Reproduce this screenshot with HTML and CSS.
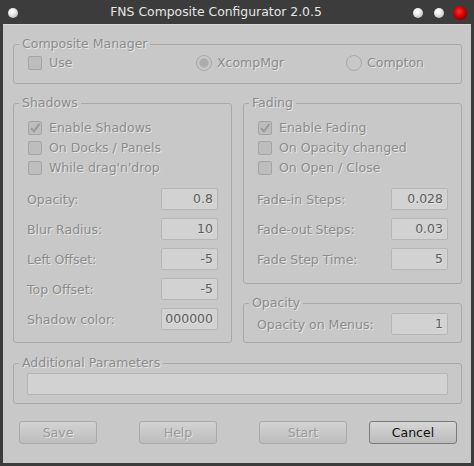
FILE: index.html
```html
<!DOCTYPE html>
<html>
<head>
<meta charset="utf-8">
<link rel="stylesheet" href="styles.css">
</head>
<body>
<div class="window">
  <div class="titlebar">
    <div class="tb-left"><span class="orb"></span></div>
    <div class="title">FNS Composite Configurator 2.0.5</div>
    <div class="tb-right"><span class="orb"></span><span class="orb"></span><span class="orb red"></span></div>
  </div>
  <div class="client">
    <fieldset class="group cm">
      <legend>Composite Manager</legend>
      <div class="cm-row">
        <div class="opt"><span class="check"></span><span class="txt">Use</span></div>
        <div class="opt"><span class="radio on"></span><span class="txt">XcompMgr</span></div>
        <div class="opt"><span class="radio"></span><span class="txt">Compton</span></div>
      </div>
    </fieldset>

    <div class="columns">
      <fieldset class="group shadows">
        <legend>Shadows</legend>
        <div class="checks">
          <div class="opt"><span class="check on"><svg viewBox="0 0 14 14" width="14" height="14"><path d="M3 7.2 L6 10.2 L11.5 2.8" fill="none" stroke="#9a9a9a" stroke-width="2"/></svg></span><span class="txt">Enable Shadows</span></div>
          <div class="opt"><span class="check"></span><span class="txt">On Docks / Panels</span></div>
          <div class="opt"><span class="check"></span><span class="txt">While drag'n'drop</span></div>
        </div>
        <div class="fields">
          <div class="field"><span class="lbl">Opacity:</span><span class="box">0.8</span></div>
          <div class="field"><span class="lbl">Blur Radius:</span><span class="box">10</span></div>
          <div class="field"><span class="lbl">Left Offset:</span><span class="box">-5</span></div>
          <div class="field"><span class="lbl">Top Offset:</span><span class="box">-5</span></div>
          <div class="field"><span class="lbl">Shadow color:</span><span class="box">000000</span></div>
        </div>
      </fieldset>

      <div class="col-right">
        <fieldset class="group fading">
          <legend>Fading</legend>
          <div class="checks">
            <div class="opt"><span class="check on"><svg viewBox="0 0 14 14" width="14" height="14"><path d="M3 7.2 L6 10.2 L11.5 2.8" fill="none" stroke="#9a9a9a" stroke-width="2"/></svg></span><span class="txt">Enable Fading</span></div>
            <div class="opt"><span class="check"></span><span class="txt">On Opacity changed</span></div>
            <div class="opt"><span class="check"></span><span class="txt">On Open / Close</span></div>
          </div>
          <div class="fields">
            <div class="field"><span class="lbl">Fade-in Steps:</span><span class="box">0.028</span></div>
            <div class="field"><span class="lbl">Fade-out Steps:</span><span class="box">0.03</span></div>
            <div class="field"><span class="lbl">Fade Step Time:</span><span class="box">5</span></div>
          </div>
        </fieldset>
        <fieldset class="group opacity">
          <legend>Opacity</legend>
          <div class="field"><span class="lbl">Opacity on Menus:</span><span class="box">1</span></div>
        </fieldset>
      </div>
    </div>

    <fieldset class="group extra">
      <legend>Additional Parameters</legend>
      <div class="wide-box"></div>
    </fieldset>

    <div class="buttons">
      <div class="btn w78">Save</div>
      <div class="btn w78 g42">Help</div>
      <div class="btn w88 g42">Start</div>
      <div class="btn w88 g22 active">Cancel</div>
    </div>
  </div>
</div>
</body>
</html>
```

FILE: styles.css
```css
html, body {
  margin: 0;
  padding: 0;
  background: #3c3c3c;
}

.window {
  width: 474px;
  height: 466px;
  background: #3c3c3c;
  display: flex;
  flex-direction: column;
  font-family: "DejaVu Sans", sans-serif;
  font-size: 12.5px;
  box-sizing: border-box;
}

.titlebar {
  height: 24px;
  display: flex;
  align-items: center;
  flex: none;
}

.tb-left {
  width: 26px;
  display: flex;
  align-items: center;
  padding-left: 8px;
  box-sizing: border-box;
}

.tb-left .orb {
  margin-top: 1px;
}

.title {
  flex: 1;
  text-align: center;
  color: #e6e6e6;
  font-size: 12.4px;
  line-height: 24px;
}

.tb-right {
  width: 68px;
  display: flex;
  align-items: center;
  gap: 11px;
  padding-left: 7px;
  box-sizing: border-box;
  padding-top: 2px;
}

.orb {
  display: block;
  width: 10px;
  height: 10px;
  border-radius: 50%;
  background: radial-gradient(circle at 40% 35%, #ffffff 0, #f0f0f0 30%, #c4c4c4 75%, #9a9a9a 100%);
}

.orb.red {
  background: radial-gradient(circle at 45% 40%, #ff3030 0, #d00000 45%, #8a0000 75%, #2c2c2c 78%, #262626 100%);
  width: 14px;
  height: 14px;
  margin-left: -2px;
}

.client {
  flex: 1;
  margin: 0 3px 3px 3px;
  background: #c8c8c8;
  padding: 12px 9px 0 10px;
  box-sizing: border-box;
  border-top: 1px solid #d6d6d6;
  display: flex;
  flex-direction: column;
}

.group {
  margin: 0;
  min-inline-size: 0;
  min-width: 0;
  border: 1px solid #a9a9a9;
  border-radius: 3px;
  padding: 0 13px 0 14px;
}

.group legend {
  padding: 0 3px;
  margin-left: -9px;
  line-height: 14px;
  font-size: 12.5px;
  color: #8c8c8c;
  text-shadow: 1px 1px 0 rgba(255,255,255,0.55);
}

.cm {
  padding-top: 4px;
  padding-bottom: 14px;
}

.cm-row {
  display: grid;
  grid-template-columns: 169px 150px auto;
  height: 14px;
  align-items: center;
}

.opt {
  display: flex;
  align-items: center;
  color: #8c8c8c;
  text-shadow: 1px 1px 0 rgba(255,255,255,0.55);
  white-space: nowrap;
}

.opt .txt {
  margin-left: 7px;
  line-height: 14px;
}

.check {
  width: 14px;
  height: 14px;
  box-sizing: border-box;
  border: 1px solid #a4a4a4;
  border-radius: 2px;
  background: #bdbdbd;
  display: block;
  flex: none;
}

.check svg {
  display: block;
  margin: -1px 0 0 -1px;
}

.radio {
  width: 16px;
  height: 16px;
  box-sizing: border-box;
  border: 1px solid #a8a8a8;
  border-radius: 50%;
  display: flex;
  align-items: center;
  justify-content: center;
  flex: none;
  margin-left: -1px;
}

.radio.on::after {
  content: "";
  width: 8px;
  height: 8px;
  border-radius: 50%;
  background: #ababab;
  box-shadow: 0 0 0 1px #b8b8b8;
}

.cm .opt:nth-child(2) .txt,
.cm .opt:nth-child(3) .txt {
  margin-left: 5px;
}

.columns {
  display: flex;
  gap: 11px;
  margin-top: 12px;
}

.shadows {
  width: 219px;
  box-sizing: border-box;
  flex: none;
  padding-top: 8px;
  padding-bottom: 12px;
}

.col-right {
  width: 219px;
  flex: none;
  display: flex;
  flex-direction: column;
}

.fading {
  padding-top: 8px;
  padding-bottom: 13px;
}

.opacity {
  margin-top: 12px;
  padding-top: 3px;
  padding-bottom: 7px;
}

.checks {
  display: flex;
  flex-direction: column;
}

.checks .opt {
  height: 20px;
}

.fields {
  display: flex;
  flex-direction: column;
  gap: 8px;
  margin-top: 10px;
}

.field {
  display: flex;
  align-items: center;
  justify-content: space-between;
  height: 22px;
}

.lbl {
  color: #8c8c8c;
  text-shadow: 1px 1px 0 rgba(255,255,255,0.55);
  margin-left: -1px;
  white-space: nowrap;
}

.box {
  width: 57px;
  height: 22px;
  box-sizing: border-box;
  border: 1px solid #b6b6b6;
  border-radius: 2px;
  background: #d2d2d2;
  color: #5e5e5e;
  text-align: right;
  padding-right: 4px;
  line-height: 20px;
  text-shadow: 1px 1px 0 rgba(255,255,255,0.35);
  flex: none;
}

.extra {
  margin-top: 13px;
  padding: 3px 13px 8px 13px;
}

.extra legend {
  margin-left: -8px;
}

.wide-box {
  height: 22px;
  box-sizing: border-box;
  border: 1px solid #b6b6b6;
  border-radius: 2px;
  background: #d2d2d2;
}

.buttons {
  display: flex;
  margin-top: 17px;
  margin-left: 6px;
}

.btn {
  height: 23px;
  box-sizing: border-box;
  border: 1px solid #a9a9a9;
  border-radius: 3px;
  background: linear-gradient(#d3d3d3, #bdbdbd);
  color: #9a9a9a;
  text-shadow: 1px 1px 0 rgba(255,255,255,0.5);
  text-align: center;
  line-height: 21px;
  font-size: 12.5px;
}

.w78 { width: 78px; }
.w88 { width: 88px; }
.g42 { margin-left: 42px; }
.g22 { margin-left: 22px; }

.btn.active {
  border-color: #7a7a7a;
  color: #111111;
  text-shadow: none;
  background: linear-gradient(#d6d6d6, #bbbbbb);
}
```
